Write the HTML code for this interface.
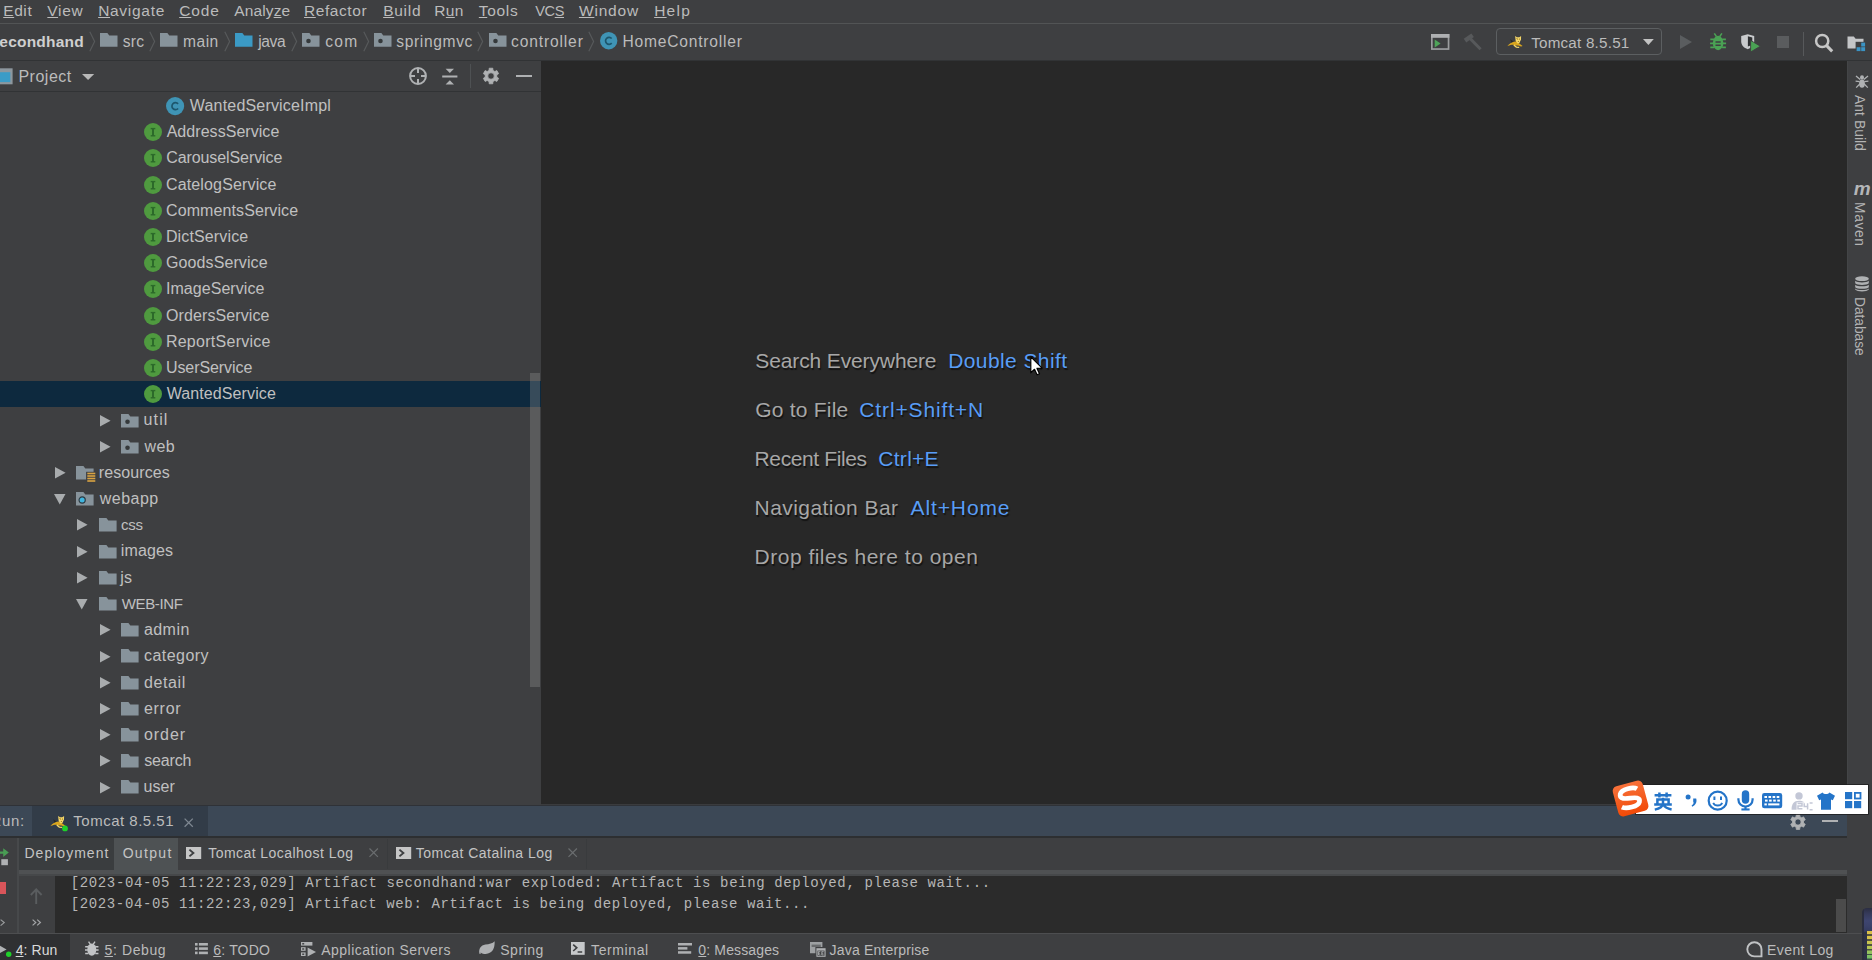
<!DOCTYPE html>
<html><head><meta charset="utf-8"><title>secondhand</title>
<style>
html,body{margin:0;padding:0}
body{width:1872px;height:960px;overflow:hidden;position:relative;background:#3e3f41;font-family:'Liberation Sans',sans-serif}
span{position:absolute;white-space:pre;display:block;font-kerning:none}
u{text-decoration:underline;text-underline-offset:0.6px;text-decoration-thickness:1px}
svg{overflow:visible}
</style></head><body>
<div style="position:absolute;left:0px;top:0px;width:1872px;height:24px;background:#3e3f41;"></div>
<div style="position:absolute;left:0px;top:23px;width:1872px;height:1px;background:#525455;"></div>
<div style="position:absolute;left:0px;top:24px;width:1872px;height:36px;background:#3e3f41;"></div>
<div style="position:absolute;left:0px;top:59.5px;width:1872px;height:1px;background:#313335;"></div>
<div style="position:absolute;left:0px;top:60.5px;width:541.2px;height:744.5px;background:#3e3f41;"></div>
<div style="position:absolute;left:0px;top:91px;width:541.2px;height:1px;background:#313335;"></div>
<div style="position:absolute;left:541.2px;top:60.5px;width:1305.8px;height:743.5px;background:#282828;"></div>
<div style="position:absolute;left:1847px;top:60.5px;width:25px;height:873px;background:#3e3f41;"></div>
<div style="position:absolute;left:1846.8px;top:60.5px;width:0.8px;height:744px;background:#434547;"></div>
<div style="position:absolute;left:541.2px;top:804px;width:1305.8px;height:1px;background:#3a3b3d;"></div>
<div style="position:absolute;left:0px;top:805px;width:1847px;height:1px;background:#2f3237;"></div>
<svg style="position:absolute;left:88.7px;top:30.5px;" width="7" height="22" viewBox="0 0 7 22"><path d="M0.8,0.8 L5.6,10.5 L0.8,20.2" fill="none" stroke="#57595b" stroke-width="1.2"/></svg>
<svg style="position:absolute;left:148.5px;top:30.5px;" width="7" height="22" viewBox="0 0 7 22"><path d="M0.8,0.8 L5.6,10.5 L0.8,20.2" fill="none" stroke="#57595b" stroke-width="1.2"/></svg>
<svg style="position:absolute;left:223.6px;top:30.5px;" width="7" height="22" viewBox="0 0 7 22"><path d="M0.8,0.8 L5.6,10.5 L0.8,20.2" fill="none" stroke="#57595b" stroke-width="1.2"/></svg>
<svg style="position:absolute;left:290.5px;top:30.5px;" width="7" height="22" viewBox="0 0 7 22"><path d="M0.8,0.8 L5.6,10.5 L0.8,20.2" fill="none" stroke="#57595b" stroke-width="1.2"/></svg>
<svg style="position:absolute;left:362.7px;top:30.5px;" width="7" height="22" viewBox="0 0 7 22"><path d="M0.8,0.8 L5.6,10.5 L0.8,20.2" fill="none" stroke="#57595b" stroke-width="1.2"/></svg>
<svg style="position:absolute;left:477.3px;top:30.5px;" width="7" height="22" viewBox="0 0 7 22"><path d="M0.8,0.8 L5.6,10.5 L0.8,20.2" fill="none" stroke="#57595b" stroke-width="1.2"/></svg>
<svg style="position:absolute;left:588.0px;top:30.5px;" width="7" height="22" viewBox="0 0 7 22"><path d="M0.8,0.8 L5.6,10.5 L0.8,20.2" fill="none" stroke="#57595b" stroke-width="1.2"/></svg>
<svg style="position:absolute;left:100.0px;top:33.2px;" width="21" height="20" viewBox="0 0 21 20"><path d="M0,0 H7.35 L9.28,2.62 H17.5 V13.8 H0 Z" fill="#87939b"/></svg>
<svg style="position:absolute;left:160.0px;top:33.2px;" width="21" height="20" viewBox="0 0 21 20"><path d="M0,0 H7.35 L9.28,2.62 H17.5 V13.8 H0 Z" fill="#87939b"/></svg>
<svg style="position:absolute;left:234.9px;top:33.2px;" width="21" height="20" viewBox="0 0 21 20"><path d="M0,0 H7.35 L9.28,2.62 H17.5 V13.8 H0 Z" fill="#3b9ac5"/></svg>
<svg style="position:absolute;left:302.0px;top:33.2px;" width="21" height="20" viewBox="0 0 21 20"><path d="M0,0 H7.35 L9.28,2.62 H17.5 V13.8 H0 Z" fill="#87939b"/><circle cx="6.47" cy="8.00" r="2.3" fill="#35393b"/></svg>
<svg style="position:absolute;left:373.8px;top:33.2px;" width="21" height="20" viewBox="0 0 21 20"><path d="M0,0 H7.35 L9.28,2.62 H17.5 V13.8 H0 Z" fill="#87939b"/><circle cx="6.47" cy="8.00" r="2.3" fill="#35393b"/></svg>
<svg style="position:absolute;left:489.2px;top:33.2px;" width="21" height="20" viewBox="0 0 21 20"><path d="M0,0 H7.35 L9.28,2.62 H17.5 V13.8 H0 Z" fill="#87939b"/><circle cx="6.47" cy="8.00" r="2.3" fill="#35393b"/></svg>
<svg style="position:absolute;left:600.0px;top:32.3px;" width="17.4" height="17.4" viewBox="0 0 17.4 17.4"><circle cx="8.7" cy="8.7" r="8.7" fill="#3f94b5"/><path d="M11.70,6.50 A3.5,3.5 0 1 0 11.70,11.10" fill="none" stroke="#1d566c" stroke-width="1.7"/></svg>
<svg style="position:absolute;left:1430.8px;top:33.9px;" width="19" height="16" viewBox="0 0 19 16"><rect x="0.85" y="0.85" width="16.7" height="14.2" fill="none" stroke="#9b9d9f" stroke-width="1.7"/><rect x="0" y="0" width="18.4" height="3.8" fill="#aeb0b2"/><path d="M3.7,5.4 L9.6,9.5 L3.7,13.6 Z" fill="#4fa45a"/></svg>
<svg style="position:absolute;left:1463px;top:32.5px;" width="21" height="19" viewBox="0 0 21 19"><g stroke="#57595b" fill="none"><path d="M2.0,7.6 L9.6,2.2" stroke-width="4.4"/><path d="M7.2,5.6 L17.6,16.2" stroke-width="3.0"/></g></svg>
<div style="position:absolute;left:1496px;top:27.7px;width:166.3px;height:27.4px;border:1.3px solid #5c5f61;border-radius:4px;box-sizing:border-box"></div>
<svg style="position:absolute;left:1506.8px;top:35.2px;" width="19" height="17" viewBox="0 0 19 17"><path d="M0.3,11.3 C2.5,8.6 5.2,6.9 8.3,6.6 C9.9,6.5 11.2,7.4 12.3,8.6 C13.4,9.6 14.5,10.3 15.6,10.9 L14.2,11.5 C12.6,10.9 11.2,10.3 9.8,10.4 C7.8,10.5 6.3,9.6 4.7,9.7 C3,9.9 1.6,10.7 0.3,11.3 Z" fill="#d9a51d"/><path d="M3.2,4.2 L6.6,6.6 L4.4,7.6 Z" fill="#26282a"/><path d="M8.1,1.1 L9.9,2.3 L12.4,2.2 L14.1,0.9 L14.0,4.6 L12.4,8.1 L10.6,8.6 L8.7,6.0 Z" fill="#f6d869"/><path d="M9.6,3.6 L10.9,4.2 M12.9,3.9 L11.9,4.4 M11.2,6.0 L11.5,6.9" stroke="#7b5c10" stroke-width="0.9" fill="none"/><path d="M6.8,9.9 L9.3,12.1 L12.2,12.3" stroke="#f6d869" stroke-width="1.3" fill="none"/></svg>
<svg style="position:absolute;left:1642.8px;top:39.2px;" width="11" height="7" viewBox="0 0 11 7"><path d="M0,0 H10.8 L5.4,6 Z" fill="#c3c3c3"/></svg>
<svg style="position:absolute;left:1680px;top:35px;" width="13" height="15" viewBox="0 0 13 15"><path d="M0,0 L12,7 L0,14 Z" fill="#5a5d5f"/></svg>
<svg style="position:absolute;left:1710.0px;top:33.3px;" width="16.2" height="17.4" viewBox="0 0 16 17.4"><g fill="#4aa254" stroke="#4aa254"><ellipse cx="8" cy="10" rx="5.3" ry="7.2" stroke="none"/><path d="M6.4,3.6 L4.2,0.4 M9.6,3.6 L11.8,0.4" stroke-width="1.6" fill="none"/><path d="M0.2,6.4 H4 M12,6.4 H15.8 M0,10.4 H3.4 M12.6,10.4 H16 M0.2,14.4 H4 M12,14.4 H15.8" stroke-width="1.8" fill="none"/></g><path d="M5.4,9.0 H10.6 M5.4,12.2 H10.6" stroke="#3e3f41" stroke-width="1.5"/></svg>
<svg style="position:absolute;left:1740.6px;top:34.2px;" width="21" height="19" viewBox="0 0 21 19"><path d="M6.7,0.2 L13.2,2.0 V7.6 C13.2,11.4 10.6,14 6.7,15.2 C2.8,14 0.2,11.4 0.2,7.6 V2.0 Z" fill="#c9cbcd"/><path d="M6.9,2.3 L11.3,3.5 V7.6 C11.3,9 10.9,10.2 10.2,11.2 L6.9,12.6 Z" fill="#2f3133"/><path d="M9.6,6.4 L19.4,12.2 L9.6,18 Z" fill="#4aa254" stroke="#3e3f41" stroke-width="0.9"/></svg>
<div style="position:absolute;left:1776.6px;top:36px;width:12.8px;height:12.2px;background:#5a5c5e;"></div>
<div style="position:absolute;left:1803px;top:31.7px;width:1px;height:24.3px;background:#57595b;"></div>
<svg style="position:absolute;left:1813px;top:31.5px;" width="22" height="22" viewBox="0 0 22 22"><circle cx="9.2" cy="9" r="6.1" fill="none" stroke="#c6c6c6" stroke-width="2.5"/><path d="M13.6,13.6 L19.2,19.4" stroke="#c6c6c6" stroke-width="3" stroke-linecap="butt"/></svg>
<svg style="position:absolute;left:1846.5px;top:35.5px;" width="22" height="17" viewBox="0 0 22 17"><path d="M0.5,0.5 H6.8 L8.6,2.8 H16.5 V12.5 H0.5 Z" fill="#c4c6c8"/><rect x="8.6" y="5.8" width="10" height="10.4" fill="#3e3f41"/><rect x="14.2" y="6.6" width="3.9" height="3.9" fill="#3a93c4"/><rect x="9.6" y="11.2" width="3.9" height="3.9" fill="#3a93c4"/><rect x="14.2" y="11.2" width="3.9" height="3.9" fill="#3a93c4"/></svg>
<svg style="position:absolute;left:-1.0px;top:68.2px;" width="14.5" height="17" viewBox="0 0 14.5 17"><rect x="0" y="0.3" width="13.6" height="16" fill="#8d979e"/><rect x="0" y="4.2" width="11.3" height="9.9" fill="#3b9cc7"/></svg>
<svg style="position:absolute;left:81.7px;top:74.4px;" width="13" height="7" viewBox="0 0 13 7"><path d="M0,0 H12.2 L6.1,6 Z" fill="#b8b8b8"/></svg>
<svg style="position:absolute;left:408px;top:66px;" width="20" height="20" viewBox="0 0 20 20"><circle cx="10" cy="10" r="7.9" fill="none" stroke="#afb1b3" stroke-width="2"/><path d="M10,2 V7 M10,13 V18 M2,10 H7 M13,10 H18" stroke="#afb1b3" stroke-width="2"/></svg>
<svg style="position:absolute;left:442px;top:67.5px;" width="16" height="17" viewBox="0 0 16 17"><rect x="0.2" y="7.5" width="15.2" height="2" fill="#afb1b3"/><path d="M3.6,0.8 H12.0 L7.8,5.0 Z" fill="#afb1b3"/><path d="M3.6,16.4 H12.0 L7.8,12.2 Z" fill="#afb1b3"/></svg>
<div style="position:absolute;left:470px;top:64.3px;width:1px;height:23.6px;background:#4e5153;"></div>
<svg style="position:absolute;left:480.8px;top:66.1px;" width="20" height="20" viewBox="0 0 20 20"><path d="M11.93,4.40 L11.80,2.21 L8.20,2.21 L8.07,4.40 L6.12,5.53 L4.15,4.54 L2.35,7.66 L4.19,8.87 L4.19,11.13 L2.35,12.34 L4.15,15.46 L6.12,14.47 L8.07,15.60 L8.20,17.79 L11.80,17.79 L11.93,15.60 L13.88,14.47 L15.85,15.46 L17.65,12.34 L15.81,11.13 L15.81,8.87 L17.65,7.66 L15.85,4.54 L13.88,5.53 Z M13.28,10.00 A3.28,3.28 0 1 0 6.72,10.00 A3.28,3.28 0 1 0 13.28,10.00 Z" fill="#afb1b3" fill-rule="evenodd" stroke="#afb1b3" stroke-width="0.8" stroke-linejoin="round"/></svg>
<div style="position:absolute;left:516px;top:74.7px;width:16px;height:2.6px;background:#afb1b3;"></div>
<div style="position:absolute;left:0px;top:381px;width:541.2px;height:26px;background:#0d293e;"></div>
<svg style="position:absolute;left:166.1px;top:96.70000000000002px;" width="18.2" height="18.2" viewBox="0 0 18.2 18.2"><circle cx="9.1" cy="9.1" r="9.1" fill="#3f94b5"/><path d="M12.10,6.90 A3.5,3.5 0 1 0 12.10,11.50" fill="none" stroke="#1d566c" stroke-width="1.7"/></svg>
<svg style="position:absolute;left:143.9px;top:123.11000000000001px;" width="18.0" height="18.0" viewBox="0 0 18.0 18.0"><circle cx="9.0" cy="9.0" r="9.0" fill="#4f9a3f"/><rect x="8.0" y="5.4" width="2.0" height="7.6" fill="#2c6a2a"/><rect x="6.7" y="4.9" width="4.6" height="1.4" fill="#2c6a2a"/><rect x="6.7" y="12.1" width="4.6" height="1.4" fill="#2c6a2a"/></svg>
<svg style="position:absolute;left:143.9px;top:149.32px;" width="18.0" height="18.0" viewBox="0 0 18.0 18.0"><circle cx="9.0" cy="9.0" r="9.0" fill="#4f9a3f"/><rect x="8.0" y="5.4" width="2.0" height="7.6" fill="#2c6a2a"/><rect x="6.7" y="4.9" width="4.6" height="1.4" fill="#2c6a2a"/><rect x="6.7" y="12.1" width="4.6" height="1.4" fill="#2c6a2a"/></svg>
<svg style="position:absolute;left:143.9px;top:175.53px;" width="18.0" height="18.0" viewBox="0 0 18.0 18.0"><circle cx="9.0" cy="9.0" r="9.0" fill="#4f9a3f"/><rect x="8.0" y="5.4" width="2.0" height="7.6" fill="#2c6a2a"/><rect x="6.7" y="4.9" width="4.6" height="1.4" fill="#2c6a2a"/><rect x="6.7" y="12.1" width="4.6" height="1.4" fill="#2c6a2a"/></svg>
<svg style="position:absolute;left:143.9px;top:201.74px;" width="18.0" height="18.0" viewBox="0 0 18.0 18.0"><circle cx="9.0" cy="9.0" r="9.0" fill="#4f9a3f"/><rect x="8.0" y="5.4" width="2.0" height="7.6" fill="#2c6a2a"/><rect x="6.7" y="4.9" width="4.6" height="1.4" fill="#2c6a2a"/><rect x="6.7" y="12.1" width="4.6" height="1.4" fill="#2c6a2a"/></svg>
<svg style="position:absolute;left:143.9px;top:227.95000000000002px;" width="18.0" height="18.0" viewBox="0 0 18.0 18.0"><circle cx="9.0" cy="9.0" r="9.0" fill="#4f9a3f"/><rect x="8.0" y="5.4" width="2.0" height="7.6" fill="#2c6a2a"/><rect x="6.7" y="4.9" width="4.6" height="1.4" fill="#2c6a2a"/><rect x="6.7" y="12.1" width="4.6" height="1.4" fill="#2c6a2a"/></svg>
<svg style="position:absolute;left:143.9px;top:254.15999999999997px;" width="18.0" height="18.0" viewBox="0 0 18.0 18.0"><circle cx="9.0" cy="9.0" r="9.0" fill="#4f9a3f"/><rect x="8.0" y="5.4" width="2.0" height="7.6" fill="#2c6a2a"/><rect x="6.7" y="4.9" width="4.6" height="1.4" fill="#2c6a2a"/><rect x="6.7" y="12.1" width="4.6" height="1.4" fill="#2c6a2a"/></svg>
<svg style="position:absolute;left:143.9px;top:280.37px;" width="18.0" height="18.0" viewBox="0 0 18.0 18.0"><circle cx="9.0" cy="9.0" r="9.0" fill="#4f9a3f"/><rect x="8.0" y="5.4" width="2.0" height="7.6" fill="#2c6a2a"/><rect x="6.7" y="4.9" width="4.6" height="1.4" fill="#2c6a2a"/><rect x="6.7" y="12.1" width="4.6" height="1.4" fill="#2c6a2a"/></svg>
<svg style="position:absolute;left:143.9px;top:306.58000000000004px;" width="18.0" height="18.0" viewBox="0 0 18.0 18.0"><circle cx="9.0" cy="9.0" r="9.0" fill="#4f9a3f"/><rect x="8.0" y="5.4" width="2.0" height="7.6" fill="#2c6a2a"/><rect x="6.7" y="4.9" width="4.6" height="1.4" fill="#2c6a2a"/><rect x="6.7" y="12.1" width="4.6" height="1.4" fill="#2c6a2a"/></svg>
<svg style="position:absolute;left:143.9px;top:332.79px;" width="18.0" height="18.0" viewBox="0 0 18.0 18.0"><circle cx="9.0" cy="9.0" r="9.0" fill="#4f9a3f"/><rect x="8.0" y="5.4" width="2.0" height="7.6" fill="#2c6a2a"/><rect x="6.7" y="4.9" width="4.6" height="1.4" fill="#2c6a2a"/><rect x="6.7" y="12.1" width="4.6" height="1.4" fill="#2c6a2a"/></svg>
<svg style="position:absolute;left:143.9px;top:359.0px;" width="18.0" height="18.0" viewBox="0 0 18.0 18.0"><circle cx="9.0" cy="9.0" r="9.0" fill="#4f9a3f"/><rect x="8.0" y="5.4" width="2.0" height="7.6" fill="#2c6a2a"/><rect x="6.7" y="4.9" width="4.6" height="1.4" fill="#2c6a2a"/><rect x="6.7" y="12.1" width="4.6" height="1.4" fill="#2c6a2a"/></svg>
<svg style="position:absolute;left:143.9px;top:385.21000000000004px;" width="18.0" height="18.0" viewBox="0 0 18.0 18.0"><circle cx="9.0" cy="9.0" r="9.0" fill="#4f9a3f"/><rect x="8.0" y="5.4" width="2.0" height="7.6" fill="#2c6a2a"/><rect x="6.7" y="4.9" width="4.6" height="1.4" fill="#2c6a2a"/><rect x="6.7" y="12.1" width="4.6" height="1.4" fill="#2c6a2a"/></svg>
<svg style="position:absolute;left:99.9px;top:414.61999999999995px;" width="12" height="12" viewBox="0 0 12 12"><path d="M0,0 L10.6,5.75 L0,11.5 Z" fill="#a9acae"/></svg>
<svg style="position:absolute;left:121.1px;top:413.52px;" width="21" height="20" viewBox="0 0 21 20"><path d="M0,0 H7.39 L9.33,2.55 H17.6 V13.4 H0 Z" fill="#87939b"/><circle cx="6.51" cy="7.77" r="2.3" fill="#35393b"/></svg>
<svg style="position:absolute;left:99.9px;top:440.83px;" width="12" height="12" viewBox="0 0 12 12"><path d="M0,0 L10.6,5.75 L0,11.5 Z" fill="#a9acae"/></svg>
<svg style="position:absolute;left:121.1px;top:439.73px;" width="21" height="20" viewBox="0 0 21 20"><path d="M0,0 H7.39 L9.33,2.55 H17.6 V13.4 H0 Z" fill="#87939b"/><circle cx="6.51" cy="7.77" r="2.3" fill="#35393b"/></svg>
<svg style="position:absolute;left:55.3px;top:467.04px;" width="12" height="12" viewBox="0 0 12 12"><path d="M0,0 L10.6,5.75 L0,11.5 Z" fill="#a9acae"/></svg>
<svg style="position:absolute;left:76.2px;top:465.94000000000005px;" width="21" height="20" viewBox="0 0 21 20"><path d="M0,0 H7.39 L9.33,2.55 H17.6 V13.4 H0 Z" fill="#87939b"/><rect x="10.100000000000001" y="5.800000000000001" width="9.2" height="10.6" fill="#3e3f41"/><rect x="11.3" y="6.70" width="8" height="1.6" fill="#d9a343"/><rect x="11.3" y="9.20" width="8" height="1.6" fill="#d9a343"/><rect x="11.3" y="11.70" width="8" height="1.6" fill="#d9a343"/><rect x="11.3" y="14.20" width="8" height="1.6" fill="#d9a343"/></svg>
<svg style="position:absolute;left:54.3px;top:494.05000000000007px;" width="12" height="12" viewBox="0 0 12 12"><path d="M0,0 H11.5 L5.75,10.5 Z" fill="#a9acae"/></svg>
<svg style="position:absolute;left:76.2px;top:492.1500000000001px;" width="21" height="20" viewBox="0 0 21 20"><path d="M0,0 H7.39 L9.33,2.55 H17.6 V13.4 H0 Z" fill="#87939b"/><circle cx="6.16" cy="8.04" r="3.1" fill="#40b6e0" stroke="#2d3a42" stroke-width="1.2"/></svg>
<svg style="position:absolute;left:77.0px;top:519.46px;" width="12" height="12" viewBox="0 0 12 12"><path d="M0,0 L10.6,5.75 L0,11.5 Z" fill="#a9acae"/></svg>
<svg style="position:absolute;left:98.8px;top:518.36px;" width="21" height="20" viewBox="0 0 21 20"><path d="M0,0 H7.39 L9.33,2.55 H17.6 V13.4 H0 Z" fill="#87939b"/></svg>
<svg style="position:absolute;left:77.0px;top:545.6700000000001px;" width="12" height="12" viewBox="0 0 12 12"><path d="M0,0 L10.6,5.75 L0,11.5 Z" fill="#a9acae"/></svg>
<svg style="position:absolute;left:98.8px;top:544.57px;" width="21" height="20" viewBox="0 0 21 20"><path d="M0,0 H7.39 L9.33,2.55 H17.6 V13.4 H0 Z" fill="#87939b"/></svg>
<svg style="position:absolute;left:77.0px;top:571.8800000000001px;" width="12" height="12" viewBox="0 0 12 12"><path d="M0,0 L10.6,5.75 L0,11.5 Z" fill="#a9acae"/></svg>
<svg style="position:absolute;left:98.8px;top:570.7800000000001px;" width="21" height="20" viewBox="0 0 21 20"><path d="M0,0 H7.39 L9.33,2.55 H17.6 V13.4 H0 Z" fill="#87939b"/></svg>
<svg style="position:absolute;left:76.0px;top:598.89px;" width="12" height="12" viewBox="0 0 12 12"><path d="M0,0 H11.5 L5.75,10.5 Z" fill="#a9acae"/></svg>
<svg style="position:absolute;left:98.8px;top:596.99px;" width="21" height="20" viewBox="0 0 21 20"><path d="M0,0 H7.39 L9.33,2.55 H17.6 V13.4 H0 Z" fill="#87939b"/></svg>
<svg style="position:absolute;left:99.9px;top:624.3000000000001px;" width="12" height="12" viewBox="0 0 12 12"><path d="M0,0 L10.6,5.75 L0,11.5 Z" fill="#a9acae"/></svg>
<svg style="position:absolute;left:121.1px;top:623.2px;" width="21" height="20" viewBox="0 0 21 20"><path d="M0,0 H7.39 L9.33,2.55 H17.6 V13.4 H0 Z" fill="#87939b"/></svg>
<svg style="position:absolute;left:99.9px;top:650.51px;" width="12" height="12" viewBox="0 0 12 12"><path d="M0,0 L10.6,5.75 L0,11.5 Z" fill="#a9acae"/></svg>
<svg style="position:absolute;left:121.1px;top:649.41px;" width="21" height="20" viewBox="0 0 21 20"><path d="M0,0 H7.39 L9.33,2.55 H17.6 V13.4 H0 Z" fill="#87939b"/></svg>
<svg style="position:absolute;left:99.9px;top:676.72px;" width="12" height="12" viewBox="0 0 12 12"><path d="M0,0 L10.6,5.75 L0,11.5 Z" fill="#a9acae"/></svg>
<svg style="position:absolute;left:121.1px;top:675.62px;" width="21" height="20" viewBox="0 0 21 20"><path d="M0,0 H7.39 L9.33,2.55 H17.6 V13.4 H0 Z" fill="#87939b"/></svg>
<svg style="position:absolute;left:99.9px;top:702.9300000000001px;" width="12" height="12" viewBox="0 0 12 12"><path d="M0,0 L10.6,5.75 L0,11.5 Z" fill="#a9acae"/></svg>
<svg style="position:absolute;left:121.1px;top:701.83px;" width="21" height="20" viewBox="0 0 21 20"><path d="M0,0 H7.39 L9.33,2.55 H17.6 V13.4 H0 Z" fill="#87939b"/></svg>
<svg style="position:absolute;left:99.9px;top:729.14px;" width="12" height="12" viewBox="0 0 12 12"><path d="M0,0 L10.6,5.75 L0,11.5 Z" fill="#a9acae"/></svg>
<svg style="position:absolute;left:121.1px;top:728.04px;" width="21" height="20" viewBox="0 0 21 20"><path d="M0,0 H7.39 L9.33,2.55 H17.6 V13.4 H0 Z" fill="#87939b"/></svg>
<svg style="position:absolute;left:99.9px;top:755.35px;" width="12" height="12" viewBox="0 0 12 12"><path d="M0,0 L10.6,5.75 L0,11.5 Z" fill="#a9acae"/></svg>
<svg style="position:absolute;left:121.1px;top:754.25px;" width="21" height="20" viewBox="0 0 21 20"><path d="M0,0 H7.39 L9.33,2.55 H17.6 V13.4 H0 Z" fill="#87939b"/></svg>
<svg style="position:absolute;left:99.9px;top:781.5600000000001px;" width="12" height="12" viewBox="0 0 12 12"><path d="M0,0 L10.6,5.75 L0,11.5 Z" fill="#a9acae"/></svg>
<svg style="position:absolute;left:121.1px;top:780.46px;" width="21" height="20" viewBox="0 0 21 20"><path d="M0,0 H7.39 L9.33,2.55 H17.6 V13.4 H0 Z" fill="#87939b"/></svg>
<div style="position:absolute;left:530px;top:373px;width:10.3px;height:314px;background:rgba(166,166,166,0.28);"></div>
<svg style="position:absolute;left:1854.5px;top:73.8px;" width="15" height="15" viewBox="0 0 15 15"><g fill="#afb1b3" stroke="#afb1b3"><ellipse cx="7" cy="3.4" rx="2" ry="2.2" stroke="none"/><ellipse cx="7" cy="9.6" rx="2.9" ry="4.2" stroke="none"/><path d="M5.2,5.6 L1.0,2.0 M8.8,5.6 L13.0,2.0 M4.6,7.6 L0.6,7.2 M9.4,7.6 L13.4,7.2 M4.8,10 L1.2,13.6 M9.2,10 L12.8,13.6" stroke-width="1.3" fill="none"/></g></svg>
<svg style="position:absolute;left:1855px;top:276px;" width="15" height="16" viewBox="0 0 15 16"><g fill="#afb1b3"><ellipse cx="7" cy="2.7" rx="6.8" ry="2.4"/><path d="M0.2,4.8 C2,6.9 12,6.9 13.8,4.8 V7.3 C12,9.4 2,9.4 0.2,7.3 Z"/><path d="M0.2,8.7 C2,10.8 12,10.8 13.8,8.7 V11.2 C12,13.3 2,13.3 0.2,11.2 Z"/><path d="M0.2,12.6 C2,14.6 12,14.6 13.8,12.6 V13.5 C12,16 2,16 0.2,13.5 Z"/></g></svg>
<div style="position:absolute;left:0px;top:806px;width:1847px;height:30px;background:#3c4856;"></div>
<div style="position:absolute;left:32px;top:806px;width:175.9px;height:30px;background:#323c48;"></div>
<div style="position:absolute;left:0px;top:836px;width:1847px;height:1.5px;background:#2d2f31;"></div>
<svg style="position:absolute;left:50.0px;top:814.6px;" width="19" height="17" viewBox="0 0 19 17"><path d="M0.3,11.3 C2.5,8.6 5.2,6.9 8.3,6.6 C9.9,6.5 11.2,7.4 12.3,8.6 C13.4,9.6 14.5,10.3 15.6,10.9 L14.2,11.5 C12.6,10.9 11.2,10.3 9.8,10.4 C7.8,10.5 6.3,9.6 4.7,9.7 C3,9.9 1.6,10.7 0.3,11.3 Z" fill="#d9a51d"/><path d="M3.2,4.2 L6.6,6.6 L4.4,7.6 Z" fill="#26282a"/><path d="M8.1,1.1 L9.9,2.3 L12.4,2.2 L14.1,0.9 L14.0,4.6 L12.4,8.1 L10.6,8.6 L8.7,6.0 Z" fill="#f6d869"/><path d="M9.6,3.6 L10.9,4.2 M12.9,3.9 L11.9,4.4 M11.2,6.0 L11.5,6.9" stroke="#7b5c10" stroke-width="0.9" fill="none"/><path d="M6.8,9.9 L9.3,12.1 L12.2,12.3" stroke="#f6d869" stroke-width="1.3" fill="none"/><circle cx="15" cy="13.4" r="2.9" fill="#1fd02a"/></svg>
<svg style="position:absolute;left:184px;top:818px;" width="10" height="10" viewBox="0 0 10 10"><path d="M0.6,0.6 L8.8,8.8 M8.8,0.6 L0.6,8.8" stroke="#7e8791" stroke-width="1.3"/></svg>
<svg style="position:absolute;left:1788.4px;top:811.6px;" width="20" height="20" viewBox="0 0 20 20"><path d="M11.83,4.68 L11.71,2.59 L8.29,2.59 L8.17,4.68 L6.31,5.76 L4.44,4.82 L2.73,7.78 L4.48,8.93 L4.48,11.07 L2.73,12.22 L4.44,15.18 L6.31,14.24 L8.17,15.32 L8.29,17.41 L11.71,17.41 L11.83,15.32 L13.69,14.24 L15.56,15.18 L17.27,12.22 L15.52,11.07 L15.52,8.93 L17.27,7.78 L15.56,4.82 L13.69,5.76 Z M13.12,10.00 A3.1159999999999997,3.1159999999999997 0 1 0 6.88,10.00 A3.1159999999999997,3.1159999999999997 0 1 0 13.12,10.00 Z" fill="#afb1b3" fill-rule="evenodd" stroke="#afb1b3" stroke-width="0.8" stroke-linejoin="round"/></svg>
<div style="position:absolute;left:1822.1px;top:819.8000000000001px;width:15.700000000000045px;height:2.6px;background:#afb1b3;"></div>
<div style="position:absolute;left:0px;top:837.5px;width:1847px;height:32px;background:#3e3f41;"></div>
<div style="position:absolute;left:17.4px;top:837.5px;width:1.6px;height:96px;background:#47494b;"></div>
<div style="position:absolute;left:19px;top:837.5px;width:95px;height:32px;background:#3a3d3f;"></div>
<div style="position:absolute;left:114.4px;top:837.5px;width:63.4px;height:36.5px;background:#4e5254;"></div>
<div style="position:absolute;left:19px;top:869.5px;width:95.4px;height:4.5px;background:#4f5153;"></div>
<div style="position:absolute;left:177.8px;top:869.5px;width:1669.2px;height:4.5px;background:#4f5153;"></div>
<div style="position:absolute;left:19px;top:874px;width:1828px;height:2px;background:#46484a;"></div>
<div style="position:absolute;left:386.5px;top:839px;width:1px;height:30px;background:#393b3d;"></div>
<div style="position:absolute;left:586.3px;top:839px;width:1px;height:30px;background:#393b3d;"></div>
<svg style="position:absolute;left:186.3px;top:846.8px;" width="16" height="13" viewBox="0 0 16 13"><rect x="0" y="0" width="15.2" height="12" fill="#c6c6c6"/><path d="M3.4,2.6 L7.4,6 L3.4,9.4" fill="none" stroke="#3e3f41" stroke-width="1.9"/></svg>
<svg style="position:absolute;left:368.5px;top:848.2px;" width="10" height="10" viewBox="0 0 10 10"><path d="M0.5,0.5 L8.9,8.9 M8.9,0.5 L0.5,8.9" stroke="#6a6d6f" stroke-width="1.2"/></svg>
<svg style="position:absolute;left:395.5px;top:846.8px;" width="16" height="13" viewBox="0 0 16 13"><rect x="0" y="0" width="15.2" height="12" fill="#c6c6c6"/><path d="M3.4,2.6 L7.4,6 L3.4,9.4" fill="none" stroke="#3e3f41" stroke-width="1.9"/></svg>
<svg style="position:absolute;left:567.8px;top:848.2px;" width="10" height="10" viewBox="0 0 10 10"><path d="M0.5,0.5 L8.9,8.9 M8.9,0.5 L0.5,8.9" stroke="#6a6d6f" stroke-width="1.2"/></svg>
<svg style="position:absolute;left:0px;top:847.5px;" width="10" height="18" viewBox="0 0 10 18"><path d="M-3,3.6 H3.2 V0.2 L8.8,4.6 L3.2,9 V5.8 H-3 Z" fill="#499c54"/><rect x="1.3" y="11.2" width="6.6" height="6" fill="#b0b2b4"/></svg>
<div style="position:absolute;left:0px;top:881.7px;width:6.2px;height:12.6px;background:#d9555a;"></div>
<svg style="position:absolute;left:0px;top:918.5px;" width="6" height="8" viewBox="0 0 6 8"><path d="M0.6,0.6 L4.2,3.6 L0.6,6.6" fill="none" stroke="#9a9c9e" stroke-width="1.2"/></svg>
<svg style="position:absolute;left:29.5px;top:887.5px;" width="13" height="17" viewBox="0 0 13 17"><path d="M6.2,16 V1.8 M0.8,7 L6.2,1.4 L11.6,7" fill="none" stroke="#5a5d5f" stroke-width="1.9"/></svg>
<svg style="position:absolute;left:32.4px;top:918.5px;" width="10" height="8" viewBox="0 0 10 8"><path d="M0.6,0.6 L3.8,3.5 L0.6,6.4 M5.2,0.6 L8.4,3.5 L5.2,6.4" fill="none" stroke="#a4a6a8" stroke-width="1.2"/></svg>
<div style="position:absolute;left:54.7px;top:876px;width:1792.3px;height:57px;background:#2b2b2b;"></div>
<div style="position:absolute;left:1836px;top:899px;width:10.2px;height:33.2px;background:#4b4b4b;"></div>
<div style="position:absolute;left:0px;top:933px;width:1872px;height:27px;background:#3e3f41;"></div>
<div style="position:absolute;left:0px;top:933px;width:1872px;height:1px;background:#4d4e50;"></div>
<div style="position:absolute;left:0px;top:934px;width:69.7px;height:26px;background:#2f3032;"></div>
<svg style="position:absolute;left:0px;top:944.2px;" width="12" height="14" viewBox="0 0 12 14"><path d="M-3,0 L6.6,5.4 L-3,10.8 Z" fill="#afb1b3"/><circle cx="8.7" cy="10.3" r="2.7" fill="#1fd02a"/></svg>
<svg style="position:absolute;left:84.9px;top:941.2px;" width="13.6" height="15.2" viewBox="0 0 16 17.4"><g fill="#c2c4c6" stroke="#c2c4c6"><ellipse cx="8" cy="10" rx="5.3" ry="7.2" stroke="none"/><path d="M6.4,3.6 L4.2,0.4 M9.6,3.6 L11.8,0.4" stroke-width="1.6" fill="none"/><path d="M0.2,6.4 H4 M12,6.4 H15.8 M0,10.4 H3.4 M12.6,10.4 H16 M0.2,14.4 H4 M12,14.4 H15.8" stroke-width="1.8" fill="none"/></g><path d="M5.4,9.0 H10.6 M5.4,12.2 H10.6" stroke="#c2c4c6" stroke-width="1.5"/></svg>
<svg style="position:absolute;left:194.7px;top:942.6px;" width="14" height="12" viewBox="0 0 14 12"><rect x="0" y="0.0" width="2.6" height="2.6" fill="#afb1b3"/><rect x="3.9" y="0.0" width="9" height="2.6" fill="#afb1b3"/><rect x="0" y="4.3" width="2.6" height="2.6" fill="#afb1b3"/><rect x="3.9" y="4.3" width="9" height="2.6" fill="#afb1b3"/><rect x="0" y="8.6" width="2.6" height="2.6" fill="#afb1b3"/><rect x="3.9" y="8.6" width="9" height="2.6" fill="#afb1b3"/></svg>
<svg style="position:absolute;left:301px;top:941.6px;" width="16" height="15" viewBox="0 0 16 15"><rect x="0" y="0" width="11.4" height="3.6" fill="#afb1b3"/><rect x="0" y="5.2" width="4.6" height="3.6" fill="#afb1b3"/><rect x="0" y="10.4" width="4.6" height="3.6" fill="#afb1b3"/><rect x="1.2" y="1.1" width="2" height="1.4" fill="#3e3f41"/><rect x="1.2" y="6.3" width="2" height="1.4" fill="#3e3f41"/><rect x="1.2" y="11.5" width="2" height="1.4" fill="#3e3f41"/><path d="M6.6,5.4 L15,10 L6.6,14.6 Z" fill="#afb1b3"/></svg>
<svg style="position:absolute;left:479px;top:940.8px;" width="17" height="15" viewBox="0 0 17 15"><path d="M15.6,0.2 C15.9,5.2 14.6,9.4 11.2,11.6 C8.2,13.6 4.2,13.2 1.6,11.4 C2.2,13.0 0.4,13.6 0.3,12.2 C-0.4,8.2 1.8,4.4 6.4,3.6 C10.2,2.9 13.6,2.6 15.6,0.2 Z" fill="#afb1b3"/></svg>
<svg style="position:absolute;left:571px;top:941.8px;" width="14" height="13" viewBox="0 0 14 13"><rect x="0" y="0" width="13.7" height="12.8" fill="#c6c8ca"/><path d="M2.2,2.6 L5.8,5.8 L2.2,9 M6.6,10 H11.2" fill="none" stroke="#3e3f41" stroke-width="1.6"/></svg>
<svg style="position:absolute;left:678.3px;top:943px;" width="15" height="11" viewBox="0 0 15 11"><rect x="0" y="0" width="14" height="2.5" fill="#afb1b3"/><rect x="0" y="4.1" width="9.4" height="2.5" fill="#afb1b3"/><rect x="0" y="8.2" width="13.2" height="2.5" fill="#afb1b3"/></svg>
<svg style="position:absolute;left:809.5px;top:941.8px;" width="16" height="15" viewBox="0 0 16 15"><path d="M0,0 H12.4 V5 H5.4 V11.2 H0 Z" fill="#9da0a2"/><rect x="1.6" y="2.6" width="9.2" height="2.4" fill="#3e3f41" opacity="0.55"/><rect x="6.4" y="6.2" width="9.2" height="8.6" fill="#afb1b3"/><rect x="7.5" y="8.6" width="7" height="5.2" fill="#3e3f41"/><path d="M8.5,9.4 V13 M8.5,9.6 H10.4 M8.5,11.2 H10 M8.5,12.9 H10.4 M11.8,9.4 V13 M11.8,9.6 H13.7 M11.8,11.2 H13.3 M11.8,12.9 H13.7" stroke="#afb1b3" stroke-width="0.8" fill="none"/></svg>
<svg style="position:absolute;left:1745.6px;top:941.2px;" width="18" height="17" viewBox="0 0 18 17"><path d="M8.4,1.2 A7.1,7.1 0 1 0 8.4,15.4 H15.5 V8.3 A7.1,7.1 0 0 0 8.4,1.2 Z" fill="none" stroke="#c0c2c4" stroke-width="1.9"/></svg>
<div style="position:absolute;left:1862.1px;top:907.5px;width:12px;height:54px;border-radius:5px 0 0 0;overflow:hidden;background:linear-gradient(180deg,#2b2e42 0%,#353a5a 10%,#3e4570 24%,#3a4169 34%,#333a5e 43.5%,#2d3146 43.6%);"><div style="position:absolute;left:0;top:0;width:2.2px;height:54px;background:#2a2d3e"></div><div style="position:absolute;left:4.8px;top:23.6px;width:8px;height:31px;background:linear-gradient(180deg,#d9bf47 0%,#d6c24a 22%,#b9c552 50%,#7fc064 80%,#62b865 100%)"></div><div style="position:absolute;left:4.8px;top:23.6px;width:8px;height:31px;background:repeating-linear-gradient(180deg,rgba(40,44,60,0) 0px,rgba(40,44,60,0) 2.9px,rgba(40,44,60,0.75) 3.1px,rgba(40,44,60,0.75) 4.7px,rgba(40,44,60,0) 4.9px)"></div></div>
<div style="position:absolute;left:1636px;top:784.6px;width:232.2px;height:29.6px;background:#ffffff;box-shadow:0 0 0 0.8px #1e1f20"></div>
<div style="position:absolute;left:1614.52px;top:782.93px;width:30.96px;height:30.53px;border-radius:4.9px;transform:rotate(-15deg);transform-origin:50% 50%;background:linear-gradient(180deg,#f7713a,#f24a08)"></div>
<svg style="position:absolute;left:1608px;top:777px;" width="44" height="42" viewBox="0 0 44 42"><g transform="translate(22 21.2) rotate(-15) scale(1.075) translate(-22 -21)"><path d="M30.6,14.2 C27.8,11.4 16.6,10.6 14.2,15.0 C12.0,19.6 18.0,20.4 22.4,21.0 C27.0,21.6 31.6,22.6 29.6,26.6 C27.4,30.6 16.2,30.0 12.6,27.0" fill="none" stroke="#ffffff" stroke-width="4.4" stroke-linecap="butt"/></g></svg>
<svg style="position:absolute;left:1654.4px;top:791.6px;" width="19" height="19" viewBox="0 0 19 19"><g stroke="#2474c8" stroke-width="2.5" fill="none" stroke-linecap="butt"><path d="M0.6,3.2 H17.4 M5.4,0.4 V5.6 M12.6,0.4 V5.6"/><path d="M3.4,12.2 V7.6 H14.6 V12.2 M0.2,12.4 H17.8 M9,5.8 V12 C8.6,14.6 5.4,16.6 0.8,17.6 M9.4,12.6 C10.6,15.2 13.6,16.8 17.6,17.6"/></g></svg>
<svg style="position:absolute;left:1685px;top:794px;" width="14" height="14" viewBox="0 0 14 14"><circle cx="3.1" cy="3.1" r="2.5" fill="#2474c8"/><path d="M8.2,4.6 H11.2 C12.2,8.2 10.8,11.2 7.2,12.8 L6.6,11.6 C8.6,10.4 9.0,8.6 8.2,7.8 Z" fill="#2474c8"/></svg>
<svg style="position:absolute;left:1706.5px;top:790px;" width="22" height="22" viewBox="0 0 22 22"><circle cx="10.7" cy="10.7" r="9" fill="none" stroke="#2474c8" stroke-width="2.2"/><path d="M7.4,6.4 V10 M14,6.4 V10" stroke="#2474c8" stroke-width="2"/><path d="M6.2,12.8 C8,16.4 13.4,16.4 15.2,12.8" fill="none" stroke="#2474c8" stroke-width="1.8"/></svg>
<svg style="position:absolute;left:1736.5px;top:790px;" width="17" height="21" viewBox="0 0 17 21"><rect x="4.8" y="0.3" width="7.4" height="13.4" rx="3.7" fill="#2474c8"/><path d="M1.4,8.2 V9.4 A7.1,7.1 0 0 0 15.6,9.4 V8.2" fill="none" stroke="#2474c8" stroke-width="2.2"/><path d="M8.5,16.4 V19" stroke="#2474c8" stroke-width="2.2"/><rect x="4.4" y="18.4" width="8.2" height="2.1" fill="#2474c8"/></svg>
<svg style="position:absolute;left:1761.9px;top:793px;" width="21" height="16" viewBox="0 0 21 16"><rect x="0" y="0" width="20.2" height="15.3" rx="2.4" fill="#2474c8"/><rect x="2.4" y="3.0" width="2.6" height="2.0" fill="#fff"/><rect x="6.5" y="3.0" width="2.6" height="2.0" fill="#fff"/><rect x="10.6" y="3.0" width="2.6" height="2.0" fill="#fff"/><rect x="14.7" y="3.0" width="2.6" height="2.0" fill="#fff"/><rect x="3.0" y="6.6" width="2.6" height="2.0" fill="#fff"/><rect x="7.1" y="6.6" width="2.6" height="2.0" fill="#fff"/><rect x="11.2" y="6.6" width="2.6" height="2.0" fill="#fff"/><rect x="15.3" y="6.6" width="2.6" height="2.0" fill="#fff"/><rect x="2.4" y="10.4" width="2.4" height="2.0" fill="#fff"/><rect x="6.2" y="10.4" width="11.2" height="2.0" fill="#fff"/></svg>
<svg style="position:absolute;left:1790.5px;top:791.8px;" width="23" height="19" viewBox="0 0 23 19"><circle cx="8" cy="3.9" r="3.7" fill="#c3c7d6"/><path d="M0.6,17.8 C0.4,12 3,8.8 8,8.8 C10.4,8.8 12.2,9.4 13.4,10.6 V17.8 Z" fill="#c3c7d6"/><rect x="5.6" y="10.4" width="16" height="8" fill="#ffffff"/><path d="M6.6,11.6 H11 V14 H7 V16.8 H11.4 M13.2,11.2 V14.4 H17.4 M16.6,11.2 V17.4 M18.6,11.0 H21.6 M18.6,17.8 H21.6" fill="none" stroke="#c3c7d6" stroke-width="1.5"/></svg>
<svg style="position:absolute;left:1817.2px;top:791.6px;" width="19" height="19" viewBox="0 0 19 19"><path d="M5.6,0.4 C6.8,2.4 11.2,2.4 12.4,0.4 L18,3.8 L15.8,8.2 L14,7.4 V17.8 H4 V7.4 L2.2,8.2 L0,3.8 Z" fill="#2474c8"/></svg>
<svg style="position:absolute;left:1844.9px;top:792px;" width="17" height="17" viewBox="0 0 17 17"><rect x="0" y="0" width="7.2" height="7.2" fill="#2474c8"/><rect x="9.9" y="0.9" width="5.6" height="5.6" fill="#fff" stroke="#2474c8" stroke-width="1.8"/><rect x="0" y="9" width="7.2" height="7.2" fill="#2474c8"/><rect x="9" y="9" width="7.2" height="7.2" fill="#2474c8"/></svg>
<svg style="position:absolute;left:1029.5px;top:355.5px;z-index:10;" width="14" height="20" viewBox="0 0 14 20"><path d="M0.8,0.8 L0.8,16.8 L4.5,13.3 L7.1,18.8 L9.5,17.8 L7.0,12.4 L12.1,12.1 Z" fill="#ffffff" stroke="#000000" stroke-width="1.2" stroke-linejoin="round"/></svg>
<span style="left:3.23px;top:0.00px;font:400 15.5px/21px 'Liberation Sans',sans-serif;letter-spacing:0.592px;color:#bbbbbb;"><u>E</u>dit</span>
<span style="left:47.33px;top:0.00px;font:400 15.5px/21px 'Liberation Sans',sans-serif;letter-spacing:0.678px;color:#bbbbbb;"><u>V</u>iew</span>
<span style="left:98.13px;top:0.00px;font:400 15.5px/21px 'Liberation Sans',sans-serif;letter-spacing:0.712px;color:#bbbbbb;"><u>N</u>avigate</span>
<span style="left:179.21px;top:0.00px;font:400 15.5px/21px 'Liberation Sans',sans-serif;letter-spacing:0.874px;color:#bbbbbb;"><u>C</u>ode</span>
<span style="left:234.37px;top:0.00px;font:400 15.5px/21px 'Liberation Sans',sans-serif;letter-spacing:0.096px;color:#bbbbbb;">Analy<u>z</u>e</span>
<span style="left:304.03px;top:0.00px;font:400 15.5px/21px 'Liberation Sans',sans-serif;letter-spacing:0.564px;color:#bbbbbb;"><u>R</u>efactor</span>
<span style="left:383.13px;top:0.00px;font:400 15.5px/21px 'Liberation Sans',sans-serif;letter-spacing:0.751px;color:#bbbbbb;"><u>B</u>uild</span>
<span style="left:434.33px;top:0.00px;font:400 15.5px/21px 'Liberation Sans',sans-serif;letter-spacing:0.322px;color:#bbbbbb;">R<u>u</u>n</span>
<span style="left:478.85px;top:0.00px;font:400 15.5px/21px 'Liberation Sans',sans-serif;letter-spacing:0.651px;color:#bbbbbb;"><u>T</u>ools</span>
<span style="left:535.34px;top:1.00px;font:400 14.6px/20px 'Liberation Sans',sans-serif;letter-spacing:-0.443px;color:#bbbbbb;">VC<u>S</u></span>
<span style="left:578.93px;top:0.00px;font:400 15.5px/21px 'Liberation Sans',sans-serif;letter-spacing:0.820px;color:#bbbbbb;"><u>W</u>indow</span>
<span style="left:654.13px;top:0.00px;font:400 15.5px/21px 'Liberation Sans',sans-serif;letter-spacing:1.281px;color:#bbbbbb;"><u>H</u>elp</span>
<span style="left:-9.54px;top:31.00px;font:700 15.5px/21px 'Liberation Sans',sans-serif;letter-spacing:0.209px;color:#cfcfcf;">secondhand</span>
<span style="left:122.87px;top:31.00px;font:400 15.6px/21px 'Liberation Sans',sans-serif;letter-spacing:0.175px;color:#bbbbbb;">src</span>
<span style="left:182.96px;top:31.00px;font:400 15.6px/21px 'Liberation Sans',sans-serif;letter-spacing:0.512px;color:#bbbbbb;">main</span>
<span style="left:258.28px;top:31.00px;font:400 15.6px/21px 'Liberation Sans',sans-serif;letter-spacing:-0.433px;color:#bbbbbb;">java</span>
<span style="left:325.14px;top:31.00px;font:400 15.6px/21px 'Liberation Sans',sans-serif;letter-spacing:1.310px;color:#bbbbbb;">com</span>
<span style="left:396.27px;top:31.00px;font:400 15.6px/21px 'Liberation Sans',sans-serif;letter-spacing:0.633px;color:#bbbbbb;">springmvc</span>
<span style="left:511.04px;top:31.00px;font:400 15.6px/21px 'Liberation Sans',sans-serif;letter-spacing:0.851px;color:#bbbbbb;">controller</span>
<span style="left:622.42px;top:31.00px;font:400 15.6px/21px 'Liberation Sans',sans-serif;letter-spacing:0.792px;color:#bbbbbb;">HomeController</span>
<span style="left:1531.16px;top:32.00px;font:400 15.2px/21px 'Liberation Sans',sans-serif;letter-spacing:0.227px;color:#bbbbbb;">Tomcat 8.5.51</span>
<span style="left:18.39px;top:66.00px;font:400 16px/21px 'Liberation Sans',sans-serif;letter-spacing:0.522px;color:#bbbbbb;">Project</span>
<span style="left:189.83px;top:95.00px;font:400 16px/21px 'Liberation Sans',sans-serif;letter-spacing:0.183px;color:#c0c0c0;">WantedServiceImpl</span>
<span style="left:166.67px;top:121.00px;font:400 16px/21px 'Liberation Sans',sans-serif;letter-spacing:0.046px;color:#c0c0c0;">AddressService</span>
<span style="left:166.19px;top:147.00px;font:400 16px/21px 'Liberation Sans',sans-serif;letter-spacing:-0.090px;color:#c0c0c0;">CarouselService</span>
<span style="left:165.99px;top:174.00px;font:400 16px/21px 'Liberation Sans',sans-serif;letter-spacing:0.148px;color:#c0c0c0;">CatelogService</span>
<span style="left:165.99px;top:200.00px;font:400 16px/21px 'Liberation Sans',sans-serif;letter-spacing:0.101px;color:#c0c0c0;">CommentsService</span>
<span style="left:165.89px;top:226.00px;font:400 16px/21px 'Liberation Sans',sans-serif;letter-spacing:0.142px;color:#c0c0c0;">DictService</span>
<span style="left:166.00px;top:252.00px;font:400 16px/21px 'Liberation Sans',sans-serif;letter-spacing:0.102px;color:#c0c0c0;">GoodsService</span>
<span style="left:165.92px;top:278.00px;font:400 16px/21px 'Liberation Sans',sans-serif;letter-spacing:0.061px;color:#c0c0c0;">ImageService</span>
<span style="left:166.04px;top:305.00px;font:400 16px/21px 'Liberation Sans',sans-serif;letter-spacing:0.093px;color:#c0c0c0;">OrdersService</span>
<span style="left:165.89px;top:331.00px;font:400 16px/21px 'Liberation Sans',sans-serif;letter-spacing:0.271px;color:#c0c0c0;">ReportService</span>
<span style="left:165.97px;top:357.00px;font:400 16px/21px 'Liberation Sans',sans-serif;letter-spacing:-0.079px;color:#c0c0c0;">UserService</span>
<span style="left:166.63px;top:383.00px;font:400 16px/21px 'Liberation Sans',sans-serif;letter-spacing:0.107px;color:#c0c0c0;">WantedService</span>
<span style="left:143.56px;top:409.00px;font:400 16px/21px 'Liberation Sans',sans-serif;letter-spacing:1.119px;color:#c0c0c0;">util</span>
<span style="left:144.42px;top:436.00px;font:400 16px/21px 'Liberation Sans',sans-serif;letter-spacing:0.448px;color:#c0c0c0;">web</span>
<span style="left:98.84px;top:462.00px;font:400 16px/21px 'Liberation Sans',sans-serif;letter-spacing:0.099px;color:#c0c0c0;">resources</span>
<span style="left:99.72px;top:488.00px;font:400 16px/21px 'Liberation Sans',sans-serif;letter-spacing:0.480px;color:#c0c0c0;">webapp</span>
<span style="left:121.06px;top:514.00px;font:400 15px/21px 'Liberation Sans',sans-serif;letter-spacing:-0.260px;color:#c0c0c0;">css</span>
<span style="left:120.83px;top:540.00px;font:400 16px/21px 'Liberation Sans',sans-serif;letter-spacing:0.134px;color:#c0c0c0;">images</span>
<span style="left:120.29px;top:567.00px;font:400 16px/21px 'Liberation Sans',sans-serif;letter-spacing:0.133px;color:#c0c0c0;">js</span>
<span style="left:121.63px;top:593.00px;font:400 15px/21px 'Liberation Sans',sans-serif;letter-spacing:-0.326px;color:#c0c0c0;">WEB-INF</span>
<span style="left:143.92px;top:619.00px;font:400 16px/21px 'Liberation Sans',sans-serif;letter-spacing:0.460px;color:#c0c0c0;">admin</span>
<span style="left:143.92px;top:645.00px;font:400 16px/21px 'Liberation Sans',sans-serif;letter-spacing:0.478px;color:#c0c0c0;">category</span>
<span style="left:143.93px;top:672.00px;font:400 16px/21px 'Liberation Sans',sans-serif;letter-spacing:0.638px;color:#c0c0c0;">detail</span>
<span style="left:143.92px;top:698.00px;font:400 16px/21px 'Liberation Sans',sans-serif;letter-spacing:0.741px;color:#c0c0c0;">error</span>
<span style="left:143.93px;top:724.00px;font:400 16px/21px 'Liberation Sans',sans-serif;letter-spacing:0.946px;color:#c0c0c0;">order</span>
<span style="left:144.15px;top:750.00px;font:400 16px/21px 'Liberation Sans',sans-serif;letter-spacing:-0.148px;color:#c0c0c0;">search</span>
<span style="left:143.56px;top:776.00px;font:400 16px/21px 'Liberation Sans',sans-serif;letter-spacing:0.060px;color:#c0c0c0;">user</span>
<span style="left:755.35px;top:347.00px;font:400 21px/27px 'Liberation Sans',sans-serif;letter-spacing:-0.129px;color:#a7a7a7;text-shadow:1px 1.5px 1px rgba(0,0,0,0.55);">Search Everywhere</span>
<span style="left:948.18px;top:347.00px;font:400 21px/27px 'Liberation Sans',sans-serif;letter-spacing:0.407px;color:#589df6;text-shadow:1px 1.5px 1px rgba(0,0,0,0.55);">Double Shift</span>
<span style="left:755.24px;top:396.00px;font:400 21px/27px 'Liberation Sans',sans-serif;letter-spacing:0.217px;color:#a7a7a7;text-shadow:1px 1.5px 1px rgba(0,0,0,0.55);">Go to File</span>
<span style="left:859.33px;top:396.00px;font:400 21px/27px 'Liberation Sans',sans-serif;letter-spacing:0.855px;color:#589df6;text-shadow:1px 1.5px 1px rgba(0,0,0,0.55);">Ctrl+Shift+N</span>
<span style="left:754.58px;top:445.00px;font:400 21px/27px 'Liberation Sans',sans-serif;letter-spacing:-0.394px;color:#a7a7a7;text-shadow:1px 1.5px 1px rgba(0,0,0,0.55);">Recent Files</span>
<span style="left:878.33px;top:445.00px;font:400 21px/27px 'Liberation Sans',sans-serif;letter-spacing:0.268px;color:#589df6;text-shadow:1px 1.5px 1px rgba(0,0,0,0.55);">Ctrl+E</span>
<span style="left:754.58px;top:494.00px;font:400 21px/27px 'Liberation Sans',sans-serif;letter-spacing:0.441px;color:#a7a7a7;text-shadow:1px 1.5px 1px rgba(0,0,0,0.55);">Navigation Bar</span>
<span style="left:910.56px;top:494.00px;font:400 21px/27px 'Liberation Sans',sans-serif;letter-spacing:0.884px;color:#589df6;text-shadow:1px 1.5px 1px rgba(0,0,0,0.55);">Alt+Home</span>
<span style="left:754.58px;top:543.00px;font:400 21px/27px 'Liberation Sans',sans-serif;letter-spacing:0.492px;color:#a7a7a7;text-shadow:1px 1.5px 1px rgba(0,0,0,0.55);">Drop files here to open</span>
<span style="left:1868.70px;top:94.97px;font:400 13.8px/19px 'Liberation Sans',sans-serif;letter-spacing:0.085px;color:#b4b4b4;transform-origin:0 0;transform:rotate(90deg);">Ant Build</span>
<span style="left:1868.70px;top:201.87px;font:400 13.8px/19px 'Liberation Sans',sans-serif;letter-spacing:0.652px;color:#b4b4b4;transform-origin:0 0;transform:rotate(90deg);">Maven</span>
<span style="left:1868.70px;top:296.87px;font:400 13.8px/19px 'Liberation Sans',sans-serif;letter-spacing:-0.047px;color:#b4b4b4;transform-origin:0 0;transform:rotate(90deg);">Database</span>
<span style="left:1853.68px;top:176.00px;font:italic 700 19px/25px 'Liberation Sans',sans-serif;letter-spacing:0.000px;color:#b4b6b8;">m</span>
<span style="left:-9.53px;top:810.00px;font:400 15px/21px 'Liberation Sans',sans-serif;letter-spacing:0.672px;color:#bbbbbb;">Run:</span>
<span style="left:73.36px;top:810.00px;font:400 15px/21px 'Liberation Sans',sans-serif;letter-spacing:0.491px;color:#bbbbbb;">Tomcat 8.5.51</span>
<span style="left:24.45px;top:843.00px;font:400 14px/20px 'Liberation Sans',sans-serif;letter-spacing:1.028px;color:#c4c4c4;">Deployment</span>
<span style="left:122.64px;top:843.00px;font:400 14px/20px 'Liberation Sans',sans-serif;letter-spacing:1.328px;color:#c4c4c4;">Output</span>
<span style="left:208.19px;top:843.00px;font:400 14px/20px 'Liberation Sans',sans-serif;letter-spacing:0.451px;color:#c4c4c4;">Tomcat Localhost Log</span>
<span style="left:415.69px;top:843.00px;font:400 14px/20px 'Liberation Sans',sans-serif;letter-spacing:0.502px;color:#c4c4c4;">Tomcat Catalina Log</span>
<span style="left:70.80px;top:873.00px;font:400 14.0px/20px 'Liberation Mono',monospace;letter-spacing:0.617px;color:#b6b6b6;">[2023-04-05 11:22:23,029] Artifact secondhand:war exploded: Artifact is being deployed, please wait...</span>
<span style="left:70.80px;top:894.00px;font:400 14.0px/20px 'Liberation Mono',monospace;letter-spacing:0.614px;color:#b6b6b6;">[2023-04-05 11:22:23,029] Artifact web: Artifact is being deployed, please wait...</span>
<span style="left:15.68px;top:940.00px;font:400 14px/20px 'Liberation Sans',sans-serif;letter-spacing:0.076px;color:#dadada;"><u>4</u>: Run</span>
<span style="left:104.54px;top:940.00px;font:400 14px/20px 'Liberation Sans',sans-serif;letter-spacing:0.606px;color:#bbbbbb;"><u>5</u>: Debug</span>
<span style="left:213.29px;top:940.00px;font:400 14px/20px 'Liberation Sans',sans-serif;letter-spacing:0.179px;color:#bbbbbb;"><u>6</u>: TODO</span>
<span style="left:321.27px;top:940.00px;font:400 14px/20px 'Liberation Sans',sans-serif;letter-spacing:0.479px;color:#bbbbbb;">Application Servers</span>
<span style="left:500.26px;top:940.00px;font:400 14px/20px 'Liberation Sans',sans-serif;letter-spacing:0.534px;color:#bbbbbb;">Spring</span>
<span style="left:591.09px;top:940.00px;font:400 14px/20px 'Liberation Sans',sans-serif;letter-spacing:0.599px;color:#bbbbbb;">Terminal</span>
<span style="left:698.35px;top:940.00px;font:400 14px/20px 'Liberation Sans',sans-serif;letter-spacing:0.138px;color:#bbbbbb;"><u>0</u>: Messages</span>
<span style="left:829.58px;top:940.00px;font:400 14px/20px 'Liberation Sans',sans-serif;letter-spacing:0.177px;color:#bbbbbb;">Java Enterprise</span>
<span style="left:1767.05px;top:940.00px;font:400 14px/20px 'Liberation Sans',sans-serif;letter-spacing:0.413px;color:#bbbbbb;">Event Log</span>
</body></html>
